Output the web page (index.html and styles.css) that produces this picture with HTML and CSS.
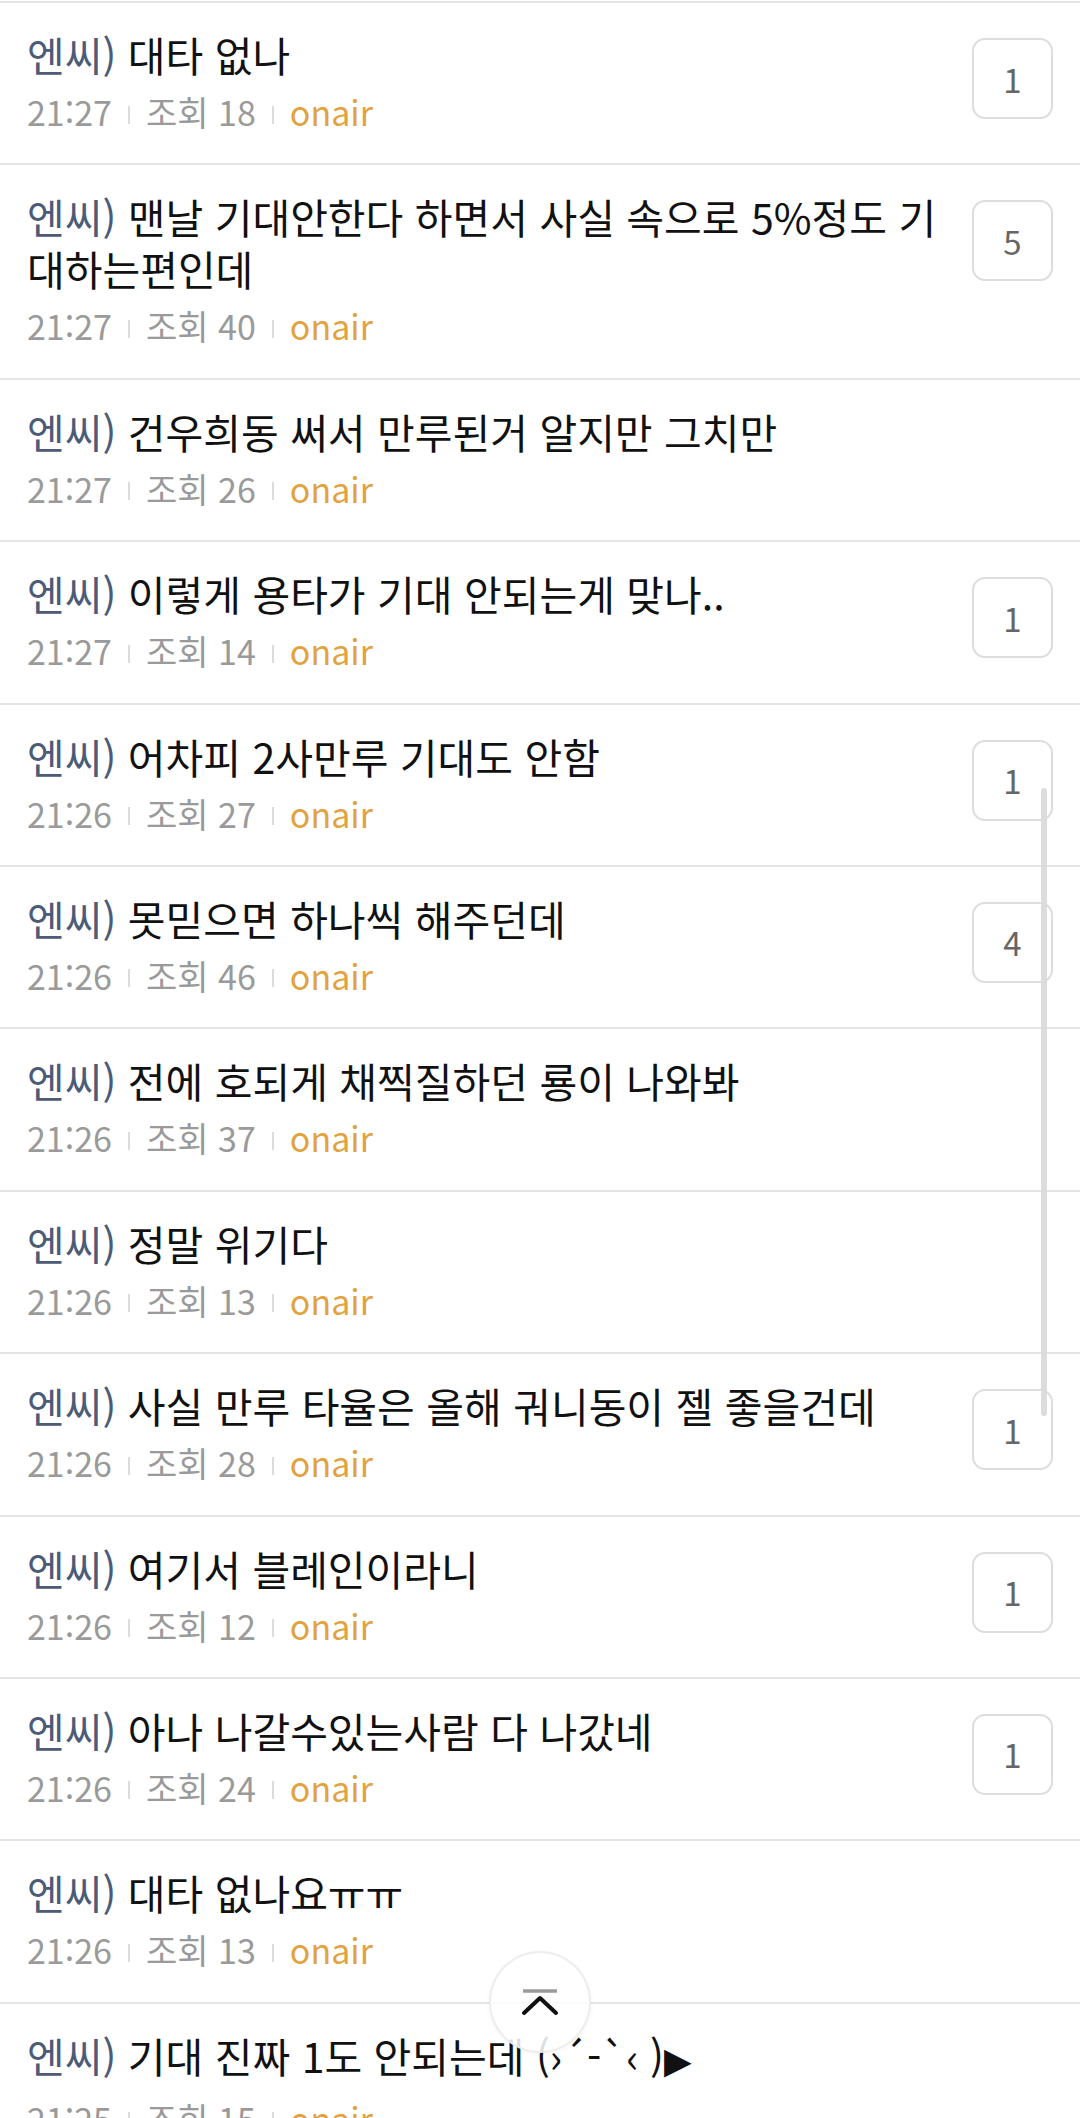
FILE: index.html
```html
<!DOCTYPE html>
<html lang="ko">
<head>
<meta charset="utf-8">
<title>onair</title>
<link rel="stylesheet" href="styles.css">
</head>
<body>
<ul class="list">
  <li class="item">
    <div class="body">
      <p class="title"><span class="cat">엔씨)</span> 대타 없나</p>
      <div class="meta"><span>21:27</span><i class="sep"></i><span>조회 18</span><i class="sep"></i><span class="src">onair</span></div>
    </div>
    <span class="cnt">1</span>
  </li>
  <li class="item">
    <div class="body">
      <p class="title"><span class="cat">엔씨)</span> 맨날 기대안한다 하면서 사실 속으로 5%정도 기대하는편인데</p>
      <div class="meta"><span>21:27</span><i class="sep"></i><span>조회 40</span><i class="sep"></i><span class="src">onair</span></div>
    </div>
    <span class="cnt">5</span>
  </li>
  <li class="item">
    <div class="body">
      <p class="title"><span class="cat">엔씨)</span> 건우희동 써서 만루된거 알지만 그치만</p>
      <div class="meta"><span>21:27</span><i class="sep"></i><span>조회 26</span><i class="sep"></i><span class="src">onair</span></div>
    </div>
  </li>
  <li class="item">
    <div class="body">
      <p class="title"><span class="cat">엔씨)</span> 이렇게 용타가 기대 안되는게 맞나..</p>
      <div class="meta"><span>21:27</span><i class="sep"></i><span>조회 14</span><i class="sep"></i><span class="src">onair</span></div>
    </div>
    <span class="cnt">1</span>
  </li>
  <li class="item">
    <div class="body">
      <p class="title"><span class="cat">엔씨)</span> 어차피 2사만루 기대도 안함</p>
      <div class="meta"><span>21:26</span><i class="sep"></i><span>조회 27</span><i class="sep"></i><span class="src">onair</span></div>
    </div>
    <span class="cnt">1</span>
  </li>
  <li class="item">
    <div class="body">
      <p class="title"><span class="cat">엔씨)</span> 못믿으면 하나씩 해주던데</p>
      <div class="meta"><span>21:26</span><i class="sep"></i><span>조회 46</span><i class="sep"></i><span class="src">onair</span></div>
    </div>
    <span class="cnt">4</span>
  </li>
  <li class="item">
    <div class="body">
      <p class="title"><span class="cat">엔씨)</span> 전에 호되게 채찍질하던 룡이 나와봐</p>
      <div class="meta"><span>21:26</span><i class="sep"></i><span>조회 37</span><i class="sep"></i><span class="src">onair</span></div>
    </div>
  </li>
  <li class="item">
    <div class="body">
      <p class="title"><span class="cat">엔씨)</span> 정말 위기다</p>
      <div class="meta"><span>21:26</span><i class="sep"></i><span>조회 13</span><i class="sep"></i><span class="src">onair</span></div>
    </div>
  </li>
  <li class="item">
    <div class="body">
      <p class="title"><span class="cat">엔씨)</span> 사실 만루 타율은 올해 궈니동이 젤 좋을건데</p>
      <div class="meta"><span>21:26</span><i class="sep"></i><span>조회 28</span><i class="sep"></i><span class="src">onair</span></div>
    </div>
    <span class="cnt">1</span>
  </li>
  <li class="item">
    <div class="body">
      <p class="title"><span class="cat">엔씨)</span> 여기서 블레인이라니</p>
      <div class="meta"><span>21:26</span><i class="sep"></i><span>조회 12</span><i class="sep"></i><span class="src">onair</span></div>
    </div>
    <span class="cnt">1</span>
  </li>
  <li class="item">
    <div class="body">
      <p class="title"><span class="cat">엔씨)</span> 아나 나갈수있는사람 다 나갔네</p>
      <div class="meta"><span>21:26</span><i class="sep"></i><span>조회 24</span><i class="sep"></i><span class="src">onair</span></div>
    </div>
    <span class="cnt">1</span>
  </li>
  <li class="item">
    <div class="body">
      <p class="title"><span class="cat">엔씨)</span> 대타 없나요ㅠㅠ</p>
      <div class="meta"><span>21:26</span><i class="sep"></i><span>조회 13</span><i class="sep"></i><span class="src">onair</span></div>
    </div>
  </li>
  <li class="item">
    <div class="body">
      <p class="title"><span class="cat">엔씨)</span> 기대 진짜 1도 안되는데 (›´-`‹ )<span class="tri">▶</span></p>
      <div class="meta"><span>21:25</span><i class="sep"></i><span>조회 15</span><i class="sep"></i><span class="src">onair</span></div>
    </div>
  </li>
</ul>

<div class="scrollbar"></div>

<button class="top-btn" type="button" aria-label="맨 위로">
  <svg width="42" height="32" viewBox="0 0 42 32">
    <line x1="4" y1="3" x2="38" y2="3" stroke="#9a9a9a" stroke-width="3.5"/>
    <polyline points="5,25 21,10 37,25" fill="none" stroke="#111" stroke-width="4" stroke-linecap="round" stroke-linejoin="round"/>
  </svg>
</button>
</body>
</html>
```

FILE: styles.css
```css
html, body {
  margin: 0;
  padding: 0;
  height: 2118px;
  overflow: hidden;
  background: #fff;
}

body {
  font-family: "Noto Sans CJK KR", "Noto Sans", sans-serif;
  color: #111;
}

.list {
  list-style: none;
  margin: 1px 0 0;
  padding: 0;
  border-top: 2px solid #e4e4e4;
}

.item {
  display: flex;
  align-items: flex-start;
  gap: 30px;
  padding: 25px 27px 31.4px;
  border-bottom: 2px solid #e4e4e4;
}

.body {
  flex: 1;
  min-width: 0;
}

.title {
  margin: 0;
  font-size: 41px;
  line-height: 52px;
  color: #111;
}

.cat {
  color: #4b5b78;
}

.tri {
  font-family: "DejaVu Sans", sans-serif;
  font-size: 36px;
}

.meta {
  display: flex;
  align-items: center;
  margin-top: 12px;
  height: 40px;
  font-size: 34px;
  line-height: 40px;
  color: #9a9a9a;
}

.sep {
  display: block;
  width: 2px;
  height: 18px;
  margin: 5px 16px 0;
  background: #dcdcdc;
}

.src {
  color: #e3a240;
}

.cnt {
  flex: none;
  box-sizing: border-box;
  width: 81px;
  height: 81px;
  margin-top: 10px;
  border: 2px solid #dddddd;
  border-radius: 13px;
  display: flex;
  align-items: center;
  justify-content: center;
  font-size: 33px;
  color: #666;
}

.scrollbar {
  position: fixed;
  left: 1041px;
  top: 788px;
  width: 6px;
  height: 628px;
  border-radius: 3px;
  background: #dcdcdc;
}

.top-btn {
  position: fixed;
  left: 489px;
  top: 1951px;
  width: 102px;
  height: 102px;
  padding: 0;
  border: 2px solid rgba(230, 230, 230, 0.7);
  border-radius: 50%;
  background: rgba(255, 255, 255, 0.86);
  box-shadow: 0 1px 4px rgba(0, 0, 0, 0.05);
  display: flex;
  align-items: center;
  justify-content: center;
}

.top-btn svg {
  display: block;
  margin-top: 4px;
}
```
